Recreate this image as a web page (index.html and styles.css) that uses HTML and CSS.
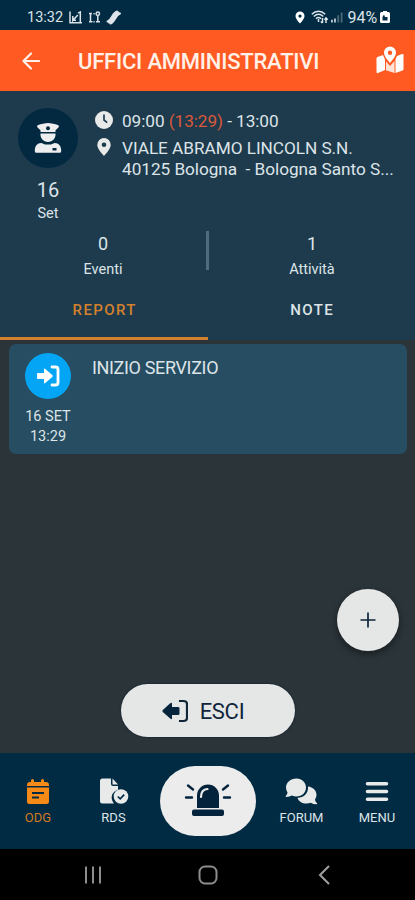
FILE: index.html
```html
<!DOCTYPE html>
<html lang="it">
<head>
    <meta charset="UTF-8">
    <meta name="viewport" content="width=device-width, initial-scale=1.0">
    <title>Uffici amministrativi</title>
    <link rel="stylesheet" href="styles.css">
</head>
<body>
    <div class="status-bar">
        <div class="status-left">
            <span class="status-time">13:32</span>
            <svg width="14" height="13" viewBox="0 0 14 13" fill="none" stroke="#dce4ea" stroke-width="1.5"><path d="M1 .5v11.200h12M9 2.200L11.300 1v10.500M3.800 5v4.500L8.800 4M3.800 9.200H7"/></svg>
            <svg width="13" height="13" viewBox="0 0 13 13" fill="none" stroke="#dce4ea" stroke-width="1.5"><circle cx="9.800" cy="2.800" r="1.700"/><path d="M2.500 3v7M9.800 5v5M1 2.500h3M1 10.800h3.500M8 10.800h4M5.500 2.800h1.200M5.500 10.800h1.200"/></svg>
            <svg width="16" height="15" viewBox="0 0 16 15" fill="none" stroke="#dce4ea" stroke-width="2" stroke-linecap="round"><path d="M1.500 11.500C6 10.500 6 3 11 1.500M4.500 13.500C9 12.500 9 5 14 3.500M3 12.500C7.500 11.500 7.500 4 12.500 2.500"/></svg>
        </div>
        <div class="status-right">
            <svg width="10" height="13" viewBox="0 0 10 13"><path fill="#fff" fill-rule="evenodd" d="M5 .5a4.500 4.500 0 0 0-4.500 4.500C.5 8 5 12.500 5 12.500S9.500 8 9.500 5A4.500 4.500 0 0 0 5 .5zm0 3a1.600 1.600 0 1 1 0 3.200 1.600 1.600 0 0 1 0-3.200z"/></svg>
            <svg class="status-wifi" width="18" height="14" viewBox="0 0 18 14" fill="none" stroke="#dce4ea" stroke-width="1.5"><path d="M.8 4.200c4-4 9.400-4 13.400 0M2.800 6.500c3-2.800 6.500-2.800 9.500 0M5 8.700c1.500-1.400 3.500-1.400 5 0M7.500 9v3M11.500 8v5M9.800 11.500l1.700 1.500M15 13V8M13.500 9.800L15 8l1.700 1.800"/></svg>
            <svg class="status-signal" width="12" height="12" viewBox="0 0 13 12"><path fill="#b8c8d2" d="M0 12V9h2v3zM3.300 12V7.500h2V12z"/><path fill="#4b6675" d="M6.800 12V4h2v8zM10.500 12V1h2v11z"/></svg>
            <span class="status-battery">94%</span>
            <svg width="10" height="13" viewBox="0 0 10 13"><path fill="#fff" fill-rule="evenodd" d="M3 1V0h4v1h1.500Q10 1 10 2.500v8Q10 12 8.500 12h-7Q0 12 0 10.500v-8Q0 1 1.500 1zm1 2.500L2.500 6v3.500h5V6H5z"/></svg>
        </div>
    </div>

    <header class="app-header">
        <svg class="back-icon" width="18" height="18" viewBox="0 0 18 18" fill="none" stroke="#fff1e8" stroke-width="2.2" stroke-linecap="round" stroke-linejoin="round"><path d="M17 9H1.500M9 1.500L1.500 9 9 16.500"/></svg>
        <h1>UFFICI AMMINISTRATIVI</h1>
        <svg class="map-icon" width="28" height="28" viewBox="0 0 28 28"><path fill="#fff" fill-rule="evenodd" d="M14 .5a6 6 0 0 0-6 6c0 3.500 3.500 7.500 6 10.500 2.500-3 6-7 6-10.500a6 6 0 0 0-6-6zm0 4a2.200 2.200 0 1 1 0 4.400 2.200 2.200 0 0 1 0-4.400z"/><path fill="#fff" d="M.5 12.500q0-1 1-1.400L7 9l2 4.500V24L2 27q-1.500.5-1.500-1z"/><path fill="#ffe3d6" d="M10 15.500l4 4.500 4.500-5V27L10 24.200z"/><path fill="#fff" d="M19.500 13.500L21 10l5-2q1.500-.4 1.500 1v14q0 1-1 1.500l-7 2.500z"/></svg>
    </header>

    <section class="summary">
        <div class="shift">
            <div class="shift-date">
                <div class="avatar">
                    <svg width="28" height="32" viewBox="0 0 28 32"><path fill="#eee" fill-rule="evenodd" d="M14 1c-3 0-7 1-9.800 2-1.500.7-1.300 2-.4 2.700L6.500 8.200V10h15V8.200l2.700-2.500c.9-.7 1.100-2-.4-2.700C21 2 17 1 14 1zm0 3.300a2 2 0 1 1 0 4 2 2 0 0 1 0-4z"/><path fill="#eee" fill-rule="evenodd" d="M6.500 11.500h15c.5 4.500-3 8.500-7.500 8.500s-8-4-7.500-8.500zM7.500 21l3.500 1.500h6l3.500-1.500c4.500 0 6.700 3.500 6.700 7.500 0 1.500-.5 2.300-1.700 2.300h-23c-1.200 0-1.700-.8-1.700-2.300C.8 24.500 3 21 7.500 21zm11 5v2.500h4V26z"/></svg>
                </div>
                <span class="day">16</span>
                <span class="month">Set</span>
            </div>
            <div class="shift-info">
                <div class="info-row">
                    <svg width="18" height="18" viewBox="0 0 18 18"><circle cx="9" cy="9" r="9" fill="#e8eaea"/><path d="M9 3.500V9l3.200 2.700" fill="none" stroke="#1e3d50" stroke-width="1.7"/></svg>
                    <p class="hours">09:00 <span class="actual">(13:29)</span> - 13:00</p>
                </div>
                <div class="info-row">
                    <svg width="18" height="18" viewBox="0 0 18 18"><path fill="#e8eaea" fill-rule="evenodd" d="M9 0a6.700 6.700 0 0 0-6.700 6.700C2.300 10.500 6.500 15 9 18c2.500-3 6.700-7.500 6.700-11.300A6.700 6.700 0 0 0 9 0zm0 4.400a2.300 2.300 0 1 1 0 4.600 2.300 2.300 0 0 1 0-4.600z"/></svg>
                    <p class="address">VIALE ABRAMO LINCOLN S.N.<br>40125 Bologna&nbsp; - Bologna Santo S...</p>
                </div>
            </div>
        </div>

        <div class="counters">
            <div class="counter">
                <span class="counter-value">0</span>
                <span class="counter-label">Eventi</span>
            </div>
            <div class="divider"></div>
            <div class="counter">
                <span class="counter-value">1</span>
                <span class="counter-label">Attività</span>
            </div>
        </div>

        <div class="tabs">
            <div class="tab active">REPORT</div>
            <div class="tab">NOTE</div>
        </div>
    </section>

    <main class="content">
        <div class="card">
            <div class="card-side">
                <div class="card-icon">
                    <svg width="24" height="22" viewBox="0 0 24 22"><path fill="#fff" d="M2 8h6V4.500q0-1.500 1.300-.6l7.200 6.300q.8.800 0 1.600l-7.200 6.300Q8 19 8 17.500V14H2q-1 0-1-1V9q0-1 1-1z"/><path d="M16 2h3.500Q22 2 22 4.500v13q0 2.500-2.500 2.500H16" fill="none" stroke="#fff" stroke-width="2.8" stroke-linecap="round"/></svg>
                </div>
                <span class="card-date">16 SET</span>
                <span class="card-time">13:29</span>
            </div>
            <h2>INIZIO SERVIZIO</h2>
        </div>

        <button class="add-btn" aria-label="Aggiungi">
            <svg width="16" height="16" viewBox="0 0 16 16" stroke="#10243a" stroke-width="1.7"><path d="M8 .5v15M.5 8h15"/></svg>
        </button>

        <button class="exit-btn">
            <svg width="26" height="24" viewBox="0 0 26 24"><path fill="#06243c" d="M16 8H10V5q0-2-1.800-.8L.8 10.900q-.8 1 0 2l7.400 6.700Q10 21 10 19v-3h6q1.500 0 1.500-1.200V9.200Q17.500 8 16 8z"/><path d="M17 2h4.500Q25 2 25 5v14q0 3-3.500 3H17" fill="none" stroke="#10243a" stroke-width="2.2"/></svg>
            <span>ESCI</span>
        </button>
    </main>

    <nav class="bottom-nav">
        <div class="nav-item active">
            <svg width="28" height="28" viewBox="0 0 28 28"><path fill="#f58a16" fill-rule="evenodd" d="M3 8V7q0-3 3-3h1V2.500q0-1.500 1.500-1.500T10 2.500V4h7V2.500Q17 1 18.500 1T20 2.500V4h2q3 0 3 3v1zM3 9.500h22v14q0 2.500-2.500 2.500h-17Q3 26 3 23.500zm5 4.500v2h12v-2zm0 4.500v2h7v-2z"/></svg>
            <span>ODG</span>
        </div>
        <div class="nav-item">
            <svg width="30" height="28" viewBox="0 0 30 28"><path fill="#e8eaea" d="M3.500.5H12V6q0 2 2 2h5v3.700a8 8 0 0 0-5 12.300q.4 1 1.200 1.500H3.500Q1 25.500 1 23V3Q1 .5 3.500.5z"/><path fill="#e8eaea" d="M13.500.5L19 6.500h-5.500z"/><circle cx="22" cy="18.500" r="7.300" fill="#e8eaea"/><path d="M18.800 18.500l2.400 2.300 4-4.200" fill="none" stroke="#012b42" stroke-width="1.6"/></svg>
            <span>RDS</span>
        </div>
        <button class="alarm-btn" aria-label="Allarme">
            <svg width="48" height="36" viewBox="0 0 48 36"><path fill="#02233b" d="M13 25V12.500a11 11 0 0 1 22 0V25zM10 26.500h28q2 0 2 2v2.500q0 2-2 2H10q-2 0-2-2v-2.500q0-2 2-2z"/><path d="M17 14q0-7.500 6.500-8" fill="none" stroke="#ececec" stroke-width="2.2" stroke-linecap="round"/><path d="M4 2.500l5 4M2 14.500h6M44 2.500l-5 4M40 14.500h6" fill="none" stroke="#02233b" stroke-width="2.4" stroke-linecap="round"/></svg>
        </button>
        <div class="nav-item">
            <svg width="34" height="28" viewBox="0 0 34 28"><path fill="#e8eaea" d="M12.500.5C18 .5 22 4.500 22 9.500s-4 9-9.500 9q-2.500 0-4.500-.9Q5.500 19 2 19q-.8-.3-.2-1Q3.500 16 3.500 14.500 2 12 2 9.500C2 4.500 6.500.5 12.500.5z"/><path fill="#e8eaea" d="M24 8.500c5 .5 8.500 4 8.500 8.500q0 2.500-1.500 4.500 0 2 2 3.700.5.800-.3 1-3.700 0-6-1.500-2 .7-4.200.7c-4.500 0-7.800-2-9-5.500C20 19.500 24.500 15.500 24 8.500z"/></svg>
            <span>FORUM</span>
        </div>
        <div class="nav-item">
            <svg width="24" height="28" viewBox="0 0 24 28" stroke="#e8eaea" stroke-width="3.6" stroke-linecap="round"><path d="M2.500 5.800h19M2.500 13.500h19M2.500 21.200h19"/></svg>
            <span>MENU</span>
        </div>
    </nav>

    <div class="system-nav">
        <svg width="18" height="18" viewBox="0 0 18 18" stroke="#8d8d8d" stroke-width="2"><path d="M2 .5v17M9 .5v17M16 .5v17"/></svg>
        <svg class="home" width="20" height="20" viewBox="0 0 20 20" fill="none" stroke="#8d8d8d" stroke-width="2"><rect x="1.500" y="1.500" width="17" height="17" rx="5.500"/></svg>
        <svg width="12" height="20" viewBox="0 0 12 20" fill="none" stroke="#a0a0a0" stroke-width="2"><path d="M11 1L2 10l9 9"/></svg>
    </div>
</body>
</html>
```

FILE: styles.css
```css
* {
    box-sizing: border-box;
}

body {
    margin: 0;
    height: 900px;
    display: flex;
    flex-direction: column;
    overflow: hidden;
    font-family: Roboto, "Liberation Sans", sans-serif;
    color: #dde4e8;
    background-color: #2a3439;
}

h1, h2, p {
    margin: 0;
    font-weight: 400;
}

svg {
    display: block;
    flex: none;
}

button {
    border: none;
    padding: 0;
    font-family: inherit;
    cursor: pointer;
}

/* status bar */
.status-bar {
    height: 30px;
    padding: 4px 25px 0 27px;
    display: flex;
    justify-content: space-between;
    background-color: #012b42;
    font-size: 14.5px;
}

.status-left, .status-right {
    display: flex;
    align-items: center;
}

.status-left {
    gap: 5px;
}

.status-time {
    width: 37px;
}

.status-wifi {
    margin-left: 6px;
}

.status-signal {
    margin-left: 2px;
}

.status-battery {
    margin: 0 3px 0 5px;
    font-size: 16px;
    letter-spacing: -0.1px;
}

/* header */
.app-header {
    height: 61px;
    padding: 0 11px 0 22px;
    display: flex;
    align-items: center;
    background-color: #ff5a22;
    color: #fff1e8;
}

.app-header h1 {
    flex: 1;
    margin-left: 38px;
    padding-top: 2px;
    font-size: 22px;
    font-weight: 500;
    letter-spacing: -0.22px;
    white-space: nowrap;
}

.map-icon {
    margin-bottom: 2px;
}

/* shift summary */
.summary {
    height: 249px;
    display: flex;
    flex-direction: column;
    background-color: #1e3b4d;
}

.shift {
    height: 138px;
    padding: 17px 0 0 18px;
    display: flex;
}

.shift-date {
    width: 60px;
    display: flex;
    flex-direction: column;
    align-items: center;
}

.avatar {
    width: 60px;
    height: 60px;
    border-radius: 50%;
    display: flex;
    align-items: center;
    justify-content: center;
    background-color: #022940;
}

.day {
    margin-top: 10px;
    font-size: 20px;
    line-height: 24px;
}

.month {
    margin-top: 3px;
    font-size: 14.5px;
    line-height: 18px;
}

.shift-info {
    margin-left: 17px;
    font-size: 17.2px;
    line-height: 21px;
    white-space: nowrap;
}

.info-row {
    display: flex;
    gap: 9px;
    padding-top: 3px;
}

.info-row + .info-row {
    padding-top: 6px;
}

.hours {
    letter-spacing: -0.06px;
}

.address {
    letter-spacing: -0.03px;
}

.actual {
    color: #d9583a;
}

.counters {
    height: 49px;
    display: flex;
}

.counter {
    flex: 1;
    padding-top: 4px;
    display: flex;
    flex-direction: column;
    align-items: center;
}

.counter-value {
    font-size: 18px;
    line-height: 22px;
}

.counter-label {
    margin-top: 6px;
    font-size: 14.5px;
    line-height: 18px;
}

.divider {
    width: 3px;
    height: 39px;
    margin-top: 2px;
    background-color: #4e6c7b;
}

.tabs {
    flex: 1;
    display: flex;
}

.tab {
    flex: 1;
    padding: 23px 0 0 2px;
    border-bottom: 3px solid transparent;
    text-align: center;
    font-size: 15px;
    line-height: 18px;
    font-weight: 500;
    letter-spacing: 1.4px;
}

.tab.active {
    color: #d4812d;
    border-bottom-color: #d4812d;
}

/* activity list */
.content {
    position: relative;
    height: 413px;
    padding: 4px 8px 0 9px;
    background-color: #2a3439;
}

.card {
    height: 110px;
    padding: 9px 16px 0;
    display: flex;
    border-radius: 7px;
    background-color: #264d61;
}

.card-side {
    width: 46px;
    display: flex;
    flex-direction: column;
    align-items: center;
    font-size: 14.5px;
    line-height: 20px;
}

.card-icon {
    width: 46px;
    height: 46px;
    margin-bottom: 8px;
    border-radius: 50%;
    display: flex;
    align-items: center;
    justify-content: center;
    background-color: #05a5f6;
}

.card-date {
    white-space: nowrap;
}

.card h2 {
    margin: 5px 0 0 21px;
    font-size: 18px;
    line-height: 20px;
    letter-spacing: -0.35px;
}

/* floating buttons */
.add-btn {
    position: absolute;
    right: 16px;
    bottom: 102px;
    width: 62px;
    height: 62px;
    border-radius: 50%;
    display: flex;
    align-items: center;
    justify-content: center;
    background-color: #e5e6e6;
    box-shadow: 0 3px 7px rgba(0, 0, 0, 0.45);
}

.exit-btn {
    position: absolute;
    left: 121px;
    bottom: 16px;
    width: 174px;
    height: 53px;
    padding: 0 10px 0 0;
    border-radius: 27px;
    display: flex;
    align-items: center;
    justify-content: center;
    gap: 12px;
    background-color: #e5e6e6;
    color: #10243a;
    font-size: 22px;
    letter-spacing: -0.3px;
    box-shadow: 0 0 2px #07182a;
}

.exit-btn span {
    padding-top: 2px;
}

/* bottom navigation */
.bottom-nav {
    height: 96px;
    padding-top: 13px;
    display: grid;
    grid-template-columns: 76px 75px 113px 75px 76px;
    justify-items: center;
    background-color: #012b42;
}

.nav-item {
    padding-top: 12px;
    display: flex;
    flex-direction: column;
    align-items: center;
    font-size: 13px;
    line-height: 16px;
}

.nav-item span {
    margin-top: 4px;
}

.nav-item.active {
    color: #cf7a22;
}

.alarm-btn {
    width: 96px;
    height: 70px;
    border-radius: 35px;
    display: flex;
    align-items: center;
    justify-content: center;
    background-color: #ececec;
}

/* android buttons */
.system-nav {
    flex: 1;
    padding: 0 85px 0 84px;
    display: flex;
    align-items: center;
    justify-content: space-between;
    background-color: #000;
}

.home {
    margin-right: 4px;
}
```
